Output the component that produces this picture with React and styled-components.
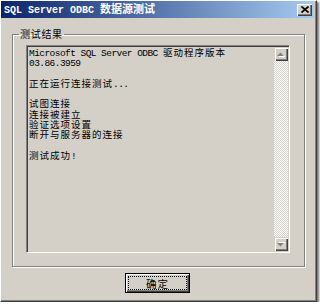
import React from 'react';
import styled, { createGlobalStyle } from 'styled-components';

const GlobalStyle = createGlobalStyle`
  html, body {
    margin: 0;
    padding: 0;
    background: #fff;
  }
  body {
    font-family: "Noto Sans CJK SC", "Liberation Sans", sans-serif;
  }
`;

const Window = styled.div`
  box-sizing: border-box;
  width: 317px;
  height: 302px;
  padding: 0 2px 0 0;
  background: #d4d0c8;
  border-style: solid;
  border-width: 1px;
  border-color: #fff #404040 #404040 #fff;
  box-shadow: inset -1px -1px 0 #808080, 2px 2px 2px rgba(0, 0, 0, 0.55);
  display: flex;
  flex-direction: column;
`;

const TitleBar = styled.div`
  height: 17px;
  padding: 0 2px 0 3px;
  display: flex;
  align-items: center;
  justify-content: space-between;
  background: linear-gradient(to right, #0a246a, #a6caf0);
`;

const Title = styled.div`
  color: #fff;
  font-weight: bold;
  font-size: 11px;
  white-space: pre;
  line-height: 17px;
`;

const TitleMono = styled.span`
  font-family: "Liberation Mono", monospace;
  font-size: 10px;
`;

const CloseButton = styled.div`
  box-sizing: border-box;
  width: 15px;
  height: 12px;
  background: #d4d0c8;
  box-shadow: inset 1px 1px 0 #fff, inset -1px -1px 0 #404040, inset -2px -2px 0 #808080;
  display: flex;
  align-items: center;
  justify-content: center;
`;

const Group = styled.fieldset`
  box-sizing: border-box;
  width: 293px;
  margin: 10px 0 0 11px;
  padding: 0;
  min-width: 0;
  border: 1px solid #808080;
  box-shadow: inset 1px 1px 0 #fff, 1px 1px 0 #fff;
`;

const Legend = styled.legend`
  margin-left: 6px;
  padding: 0 1px;
  font-size: 10px;
  letter-spacing: 0.7px;
  line-height: 12px;
  color: #000;
`;

const TextBox = styled.div`
  box-sizing: border-box;
  width: 264px;
  height: 208px;
  margin: 5px 0 13px 13px;
  padding: 1px;
  border-style: solid;
  border-width: 1px;
  border-color: #808080 #fff #fff #808080;
  box-shadow: inset 1px 1px 0 #404040, inset -1px -1px 0 #d4d0c8;
  display: flex;
`;

const Content = styled.div`
  flex: 1;
  padding: 0 0 0 1px;
  font-size: 9.5px;
  letter-spacing: 1px;
  color: #000;
`;

const Line = styled.div`
  height: 10.27px;
  line-height: 10.27px;
  white-space: pre;
`;

const Mono = styled.span`
  font-family: "Liberation Mono", monospace;
  font-size: 9.5px;
  letter-spacing: -0.55px;
`;

const ScrollBar = styled.div`
  width: 14px;
  display: flex;
  flex-direction: column;
  background: repeating-conic-gradient(#d4d0c8 0 25%, #fff 0 50%) 0 0 / 2px 2px;
`;

const ScrollButton = styled.div`
  box-sizing: border-box;
  height: 14px;
  background: #d4d0c8;
  box-shadow: inset 1px 1px 0 #d4d0c8, inset 2px 2px 0 #fff, inset -1px -1px 0 #404040,
    inset -2px -2px 0 #808080;
  display: flex;
  align-items: center;
  justify-content: center;
`;

const Track = styled.div`
  flex: 1;
`;

const Button = styled.button`
  box-sizing: border-box;
  align-self: center;
  width: 65px;
  height: 20px;
  margin-top: 6px;
  padding: 2px;
  background: #d4d0c8;
  border: 1px solid #000;
  box-shadow: inset 1px 1px 0 #fff, inset -1px -1px 0 #404040, inset -2px -2px 0 #808080;
  display: flex;
`;

const ButtonLabel = styled.span`
  flex: 1;
  border: 1px dotted #000;
  display: flex;
  align-items: center;
  justify-content: center;
  font-family: "Noto Sans CJK SC", sans-serif;
  font-size: 10.5px;
  letter-spacing: 1px;
  color: #000;
`;

const Arrow = ({ down }) => (
  <svg width="8" height="5" viewBox="0 0 8 5">
    <g transform={down ? 'translate(0 5) scale(1 -1)' : undefined}>
      <polygon points="4,0.5 7.5,4 0.5,4" fill="#fff" transform="translate(1 1)" />
      <polygon points="3.5,0.5 7,4 0,4" fill="#808080" />
    </g>
  </svg>
);

const lines = [
  <><Mono>Microsoft SQL Server ODBC </Mono>驱动程序版本</>,
  <Mono>03.86.3959</Mono>,
  '',
  <>正在运行连接测试<Mono>...</Mono></>,
  '',
  '试图连接',
  '连接被建立',
  '验证选项设置',
  '断开与服务器的连接',
  '',
  <>测试成功<Mono>!</Mono></>,
];

export default function App() {
  return (
    <>
      <GlobalStyle />
      <Window>
        <TitleBar>
          <Title>
            <TitleMono>SQL Server ODBC </TitleMono>数据源测试
          </Title>
          <CloseButton>
            <svg width="8" height="7" viewBox="0 0 8 7">
              <path d="M0.5 0.5 L7.5 6.5 M7.5 0.5 L0.5 6.5" stroke="#000" strokeWidth="1.7" />
            </svg>
          </CloseButton>
        </TitleBar>
        <Group>
          <Legend>测试结果</Legend>
          <TextBox>
            <Content>
              {lines.map((l, i) => (
                <Line key={i}>{l}</Line>
              ))}
            </Content>
            <ScrollBar>
              <ScrollButton>
                <Arrow />
              </ScrollButton>
              <Track />
              <ScrollButton>
                <Arrow down />
              </ScrollButton>
            </ScrollBar>
          </TextBox>
        </Group>
        <Button>
          <ButtonLabel>确定</ButtonLabel>
        </Button>
      </Window>
    </>
  );
}
